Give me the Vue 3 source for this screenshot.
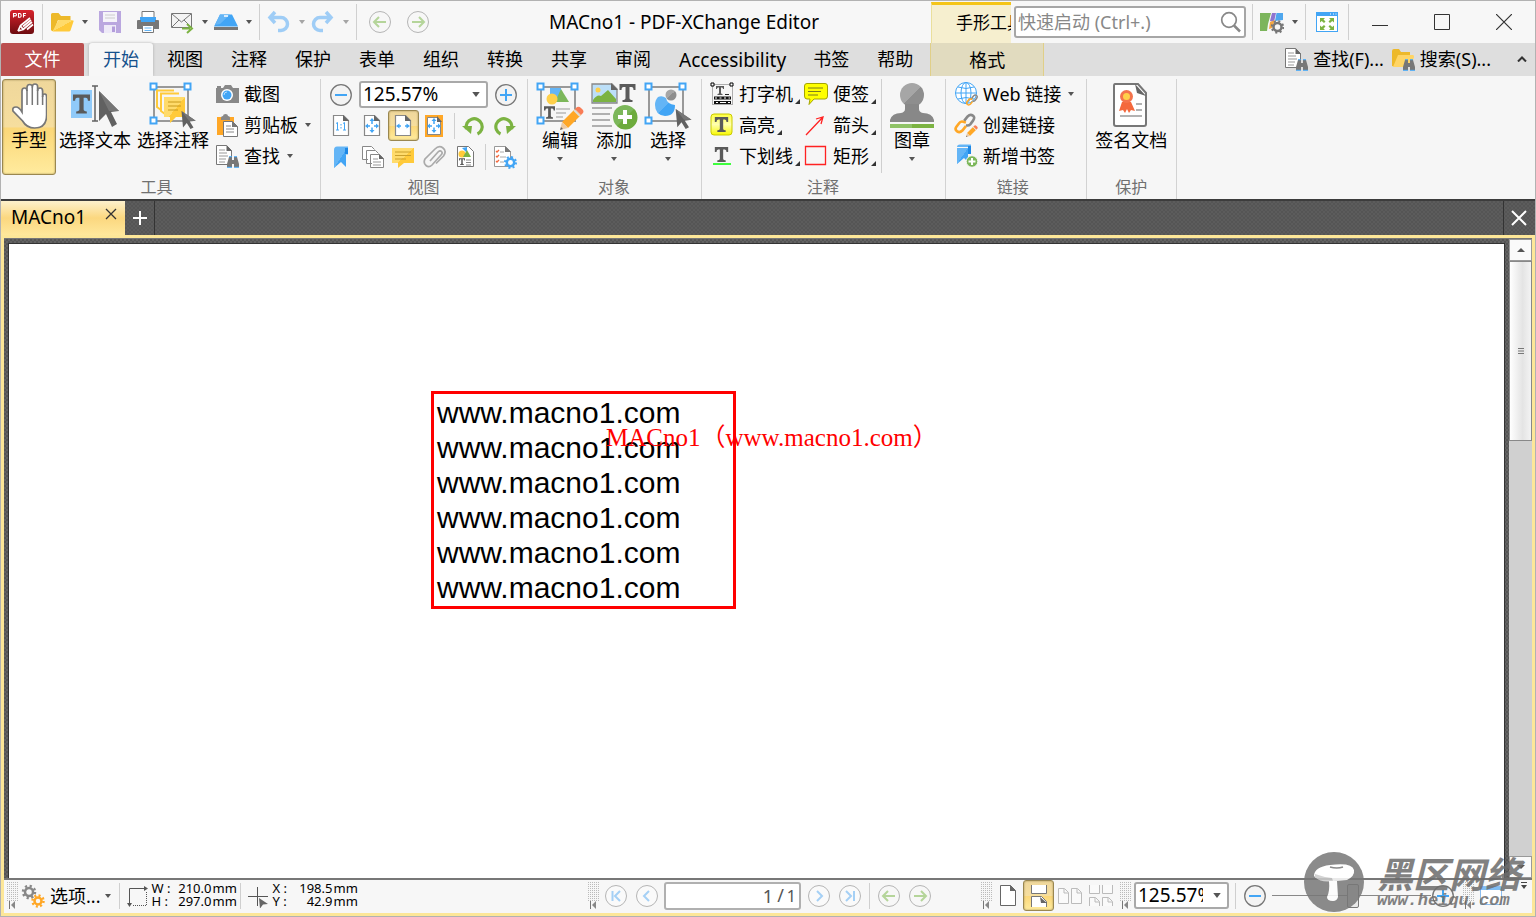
<script setup>
import { h, ref } from 'vue'

const sizes = {
  caret: [6, 4], corner: [5, 5], hand: [36, 48], selText: [48, 48], selNote: [48, 48],
  edit: [48, 48], add: [48, 48], select: [48, 48], stamp: [48, 48], sign: [48, 48],
  grip: [11, 28], mushroom: [60, 60], winMin: [16, 16], winMax: [16, 16], winClose: [16, 16],
  tabClose: [12, 12], plus: [14, 14], bigClose: [16, 16], up: [8, 4], down: [8, 4], thumbGrip: [6, 6],
  chevron: [10, 6], overflow: [8, 8],
}
const Icon = (props) => {
  const [width, height] = sizes[props.name] || [24, 24]
  return h('svg', { width, height, 'aria-hidden': 'true' }, [h('use', { href: '#' + props.name })])
}
Icon.props = ['name']

const zoom = ref('125.57%')
const page = ref('1')
const slider = ref(51)
const tabs = ['视图', '注释', '保护', '表单', '组织', '转换', '共享', '审阅', 'Accessibility', '书签', '帮助']
const lines = Array(6).fill('www.macno1.com')
</script>

<template>
  <div class="window">
    <svg width="0" height="0" class="sheet" aria-hidden="true">
      <defs>
        <linearGradient id="gRed" x2="0" y2="1"><stop stop-color="#d8222b" /><stop offset="1" stop-color="#6d0c10" /></linearGradient>
        <linearGradient id="gBlue" x2="1" y2="1"><stop offset=".5" stop-color="#64b5f6" /><stop offset=".5" stop-color="#42a5f5" /></linearGradient>
        <linearGradient id="gGrey" x2="1" y2="1"><stop offset=".5" stop-color="#a6a6a6" /><stop offset=".5" stop-color="#8e8e8e" /></linearGradient>
        <linearGradient id="gYel" x2="1" y2="1"><stop offset=".5" stop-color="#ffdb6b" /><stop offset=".5" stop-color="#ffca3a" /></linearGradient>
        <linearGradient id="gHigh" x2="0" y2="1"><stop stop-color="#ffff3c" /><stop offset=".5" stop-color="#ffffb0" /><stop offset="1" stop-color="#f8f800" /></linearGradient>
      </defs>
      <symbol id="caret" viewBox="0 0 6 4"><path d="M0 0h6L3 4z" fill="#555" /></symbol>
      <symbol id="corner" viewBox="0 0 5 5"><path d="M5 0v5H0z" fill="#333" /></symbol>
      <symbol id="up" viewBox="0 0 8 4"><path d="M0 4h8L4 0z" fill="#555" /></symbol>
      <symbol id="down" viewBox="0 0 8 4"><path d="M0 0h8L4 4z" fill="#555" /></symbol>
      <symbol id="thumbGrip" viewBox="0 0 6 6"><path d="M0 .5h6M0 3h6M0 5.500h6" stroke="#777" /></symbol>
      <symbol id="chevron" viewBox="0 0 10 6"><path d="M1 5.500 5 1.500l4 4" fill="none" stroke="#333" stroke-width="2" /></symbol>
      <symbol id="overflow" viewBox="0 0 8 8"><path d="M1 .5h6" stroke="#444" /><path d="M1 3h6L4 7z" fill="#444" /></symbol>
      <symbol id="winMin" viewBox="0 0 16 16"><path d="M0 11.500h16" stroke="#333" /></symbol>
      <symbol id="winMax" viewBox="0 0 16 16"><path d="M.5.5h15v15H.5z" fill="none" stroke="#333" /></symbol>
      <symbol id="winClose" viewBox="0 0 16 16"><path d="m0 0 16 16M16 0 0 16" stroke="#333" stroke-width="1.200" /></symbol>
      <symbol id="tabClose" viewBox="0 0 12 12"><path d="m1 1 10 10M11 1 1 11" stroke="#333" stroke-width="1.300" /></symbol>
      <symbol id="bigClose" viewBox="0 0 16 16"><path d="m1 1 14 14M15 1 1 15" stroke="#fff" stroke-width="2" /></symbol>
      <symbol id="plus" viewBox="0 0 14 14"><path d="M7 0v14M0 7h14" stroke="#fff" stroke-width="2" /></symbol>

      <symbol id="pdf" viewBox="0 0 24 24">
        <rect width="24" height="24" rx="3" fill="url(#gRed)" />
        <path d="M3.500 7.500v-4h2q1 0 1 1.200t-1 1.200h-2M8.500 3.500v3.800H10q1.200-.3 1.200-1.900T10 3.500zM13.500 7.600V3.500H16M13.500 5.500h2" fill="none" stroke="#fff" stroke-width="1.100" />
        <path d="m8 21 2.500-5.500L20 8M13 19.500l9-7.500M8 21l5-1.500-2-3M13 16.500l8-6.500M17 19.500l6-5" fill="none" stroke="#fff" stroke-width="1.700" />
      </symbol>
      <symbol id="open" viewBox="0 0 24 24">
        <path d="M1 20V4.500Q1 3 2.500 3h6L11 6h9.500v4H8l-4 11H2z" fill="#edb92a" />
        <path d="M8.500 10H22q2 0 1.500 1.500l-3 9q-.5 1-1.500 1H2.500z" fill="url(#gYel)" />
      </symbol>
      <symbol id="save" viewBox="0 0 24 24">
        <path d="M1 1h22v22H4l-3-3z" fill="#b39ddb" opacity=".9" /><path d="M5 2h14v10H5z" fill="#f5f3fa" /><path d="M7 5h10M7 8h10" stroke="#ccc" /><path d="M6 15h12v8H6z" fill="#eeeaf8" /><path d="M14 16.500h3V22h-3z" fill="#b39ddb" />
      </symbol>
      <symbol id="print" viewBox="0 0 24 24">
        <path d="M6 9V1.500h12V9" fill="#fff" stroke="#777" /><path d="M4 7h16v5H4z" fill="#42a5f5" /><path d="M2 10h3v2h14v-2h3q1 0 1 1v8H1v-8q0-1 1-1z" fill="#777" /><path d="M6.500 15.500h11v7h-11z" fill="#fff" stroke="#777" /><path d="M8.500 18h7M8.500 20.500h7" stroke="#64b5f6" />
      </symbol>
      <symbol id="mail" viewBox="0 0 24 24">
        <path d="M1.500 3.500h20v14h-20z" fill="#f4f4f4" stroke="#777" /><path d="m2 4 9.500 8L21 4M2 17l7-7M14 10l7 7" fill="none" stroke="#777" /><path d="M12 18.500h8M17 14l5 4.500-5 4.500" fill="none" stroke="#7cb342" stroke-width="2" />
      </symbol>
      <symbol id="scan" viewBox="0 0 24 24">
        <path d="M6 4.500h12l6 12H0z" fill="#42a5f5" /><path d="M6 4.500h10L6 14l-5 1z" fill="#64b5f6" /><path d="M10 6h4" stroke="#fff" stroke-width="1.500" /><path d="M0 18.500h24" stroke="#777" stroke-width="3" />
      </symbol>
      <symbol id="undo" viewBox="0 0 24 24"><path d="M8 2 3 7.500 8 13M3 7.500h11a6 6 0 0 1 0 13h-3" fill="none" stroke="#9fcdf6" stroke-width="3.500" /></symbol>
      <symbol id="redo" viewBox="0 0 24 24"><path d="m15 2 5 5.500-5 5.500M20 7.500H9a6 6 0 0 0 0 13h3" fill="none" stroke="#9fcdf6" stroke-width="3.500" /></symbol>
      <symbol id="back" viewBox="0 0 24 24"><circle cx="12" cy="12" r="10.500" fill="#f7f7f7" stroke="#b5b5b5" /><path d="M18 12H7M11 7l-5 5 5 5" fill="none" stroke="#b5d59a" stroke-width="2" /></symbol>
      <symbol id="fwd" viewBox="0 0 24 24"><circle cx="12" cy="12" r="10.500" fill="#f7f7f7" stroke="#b5b5b5" /><path d="M6 12h11M13 7l5 5-5 5" fill="none" stroke="#b5d59a" stroke-width="2" /></symbol>
      <symbol id="first" viewBox="0 0 24 24"><circle cx="12" cy="12" r="10.500" fill="#fafafa" stroke="#b5b5b5" /><path d="M8.500 7v10M16 7l-5 5 5 5" fill="none" stroke="#a5d0f5" stroke-width="2" /></symbol>
      <symbol id="prev" viewBox="0 0 24 24"><circle cx="12" cy="12" r="10.500" fill="#fafafa" stroke="#b5b5b5" /><path d="m14 7-5 5 5 5" fill="none" stroke="#a5d0f5" stroke-width="2" /></symbol>
      <symbol id="next" viewBox="0 0 24 24"><circle cx="12" cy="12" r="10.500" fill="#fafafa" stroke="#b5b5b5" /><path d="m10 7 5 5-5 5" fill="none" stroke="#a5d0f5" stroke-width="2" /></symbol>
      <symbol id="last" viewBox="0 0 24 24"><circle cx="12" cy="12" r="10.500" fill="#fafafa" stroke="#b5b5b5" /><path d="M16 7v10M8 7l5 5-5 5" fill="none" stroke="#a5d0f5" stroke-width="2" /></symbol>
      <symbol id="zoomOut" viewBox="0 0 24 24"><circle cx="12" cy="12" r="10.300" fill="#f3f3f3" stroke="#777" stroke-width="1.300" /><path d="M6 12h12" stroke="#42a5f5" stroke-width="2" /></symbol>
      <symbol id="zoomIn" viewBox="0 0 24 24"><circle cx="12" cy="12" r="10.300" fill="#f3f3f3" stroke="#777" stroke-width="1.300" /><path d="M6 12h12M12 6v12" stroke="#42a5f5" stroke-width="2" /></symbol>
      <symbol id="search" viewBox="0 0 24 24"><circle cx="11" cy="10" r="7.300" fill="none" stroke="#888" stroke-width="1.700" /><path d="m16 15.500 6 6" stroke="#888" stroke-width="2.500" /></symbol>
      <symbol id="custom" viewBox="0 0 24 24">
        <path d="M0 3h11L8 14l-1 7H0z" fill="#7cb55c" /><path d="M12 3h4l-2 9-4-1z" fill="#8e75d0" /><path d="M16.500 3H23v7l-8 1z" fill="#4fa7ee" /><path d="m10 12 5-2-3 8-3 1z" fill="#f5a742" />
        <circle cx="17.500" cy="17" r="4" fill="#f7f7f7" stroke="#777" stroke-width="2.500" /><circle cx="17.500" cy="17" r="5.700" fill="none" stroke="#777" stroke-width="2" stroke-dasharray="2 2.500" />
      </symbol>
      <symbol id="full" viewBox="0 0 24 24">
        <path d="M1 2h22v20H1z" fill="#42a5f5" /><path d="M2 6h20v15H2z" fill="#fff" /><path d="M15 4h1M18 4h1M20.500 4h1" stroke="#fff" />
        <path d="M5 8h5L8.500 9.500l2 2-1.500 1.500-2.300-2L5 12.500zM19 8h-5l1.500 1.500-2 2 1.500 1.500 2.300-2 1.700 1.500zM5 20h5l-1.500-1.500 2-2L9 15l-2.300 2L5 15.500zM19 20h-5l1.500-1.500-2-2L15 15l2.300 2 1.700-1.500z" fill="#7cb342" />
      </symbol>

      <symbol id="binos" viewBox="0 0 12 12"><path d="M2 1h3v3h2V1h3l2 7v3H7V8H5v3H0V8z" fill="#777" /><path d="M2 .7h3M7 .7h3M0 11.300h5M7 11.300h5" stroke="#42a5f5" /></symbol>
      <symbol id="find" viewBox="0 0 24 24">
        <path d="M1.500 1.500h10l5 5v14h-15z" fill="#fff" stroke="#777" /><path d="M11.500 1v6H17" fill="#666" /><path d="M4 6h6M4 9h8M4 12h9M4 15h7M4 18h6" stroke="#999" /><use href="#binos" x="12" y="12" width="12" height="12" />
      </symbol>
      <symbol id="findDir" viewBox="0 0 24 24">
        <path d="M1 19V4q0-2 2-2h5l2 3h9v5H7l-3 10z" fill="#edb92a" /><path d="M7 8h15q1 0 1 2l-3 10H2z" fill="#ffd565" /><use href="#binos" x="12" y="12" width="12" height="12" />
      </symbol>

      <symbol id="hand" viewBox="0 0 36 48">
        <path d="M11 30V9q0-3 2.500-3T16 9V5.500q0-3 2.700-3t2.600 3V5q0-3 2.700-3t2.600 3v4q0-3 2.500-3t2.500 3v6q0-3 2-3t2 3v18q0 13-12 13-8 0-12-7L2 29q-1-4 3-4 3 0 6 5z" fill="#fff" stroke="#777" stroke-width="1.700" />
        <path d="M16 8v15M21.300 5v18M26.600 8v15M31.600 14v9" stroke="#777" stroke-width="1.500" />
      </symbol>
      <symbol id="cursor" viewBox="0 0 20 24"><path d="m0 0 19 13-8 1 5 8-4 2-5-8-5 6z" fill="#616161" /><path d="m0 0 19 13-9 0z" fill="#777" /></symbol>
      <symbol id="letterT" viewBox="0 0 16 18"><path d="M0 0h16v6h-2q0-3-2-3H10v11q0 2 3 2v2H3v-2q3 0 3-2V3H4Q2 3 2 6H0z" fill="#5a5a5a" /></symbol>
      <symbol id="selText" viewBox="0 0 48 48">
        <path d="M0 8h21v28H0z" fill="#90caf9" /><use href="#letterT" x="2" y="12" width="17" height="20" /><path d="M21 4h6M24 4v35M21 39h6" stroke="#616161" stroke-width="1.500" fill="none" /><path d="m28 9 20 20-8 1 6 12-5 3-6-13-7 7z" fill="#616161" /><path d="m28 9 20 20H38z" fill="#757575" />
      </symbol>
      <symbol id="frame" viewBox="0 0 48 48">
        <path d="M5 5h34v34H5z" fill="none" stroke="#999" stroke-width="2" /><path d="M1.500 1.500h6v6h-6zM35.500 1.500h6v6h-6zM1.500 35.500h6v6h-6z" fill="#fff" stroke="#42a5f5" stroke-width="2" />
      </symbol>
      <symbol id="selNote" viewBox="0 0 48 48">
        <use href="#frame" width="48" height="48" /><path d="M7 8.500h18M8 8v17l4 3M11 11.500h19M12 12v17l4 3" fill="none" stroke="#ffca3a" stroke-width="2" /><path d="M15 15h21v20h-9l-6 6v-6h-6z" fill="url(#gYel)" /><path d="M19 20h13M19 24h13M19 28h10" stroke="#c89a1c" /><use href="#cursor" x="32" y="29" width="16" height="18" />
      </symbol>
      <symbol id="shot" viewBox="0 0 24 24">
        <path d="M2 4h4v2h2l2-3h6l2 3h6v15H1V6h1z" fill="#888" /><circle cx="12" cy="13" r="6" fill="#fff" /><circle cx="12" cy="13" r="4.500" fill="#42a5f5" /><path d="M9 13q0-3 3-3" stroke="#b8dcfa" fill="none" />
      </symbol>
      <symbol id="paste" viewBox="0 0 24 24">
        <path d="M2 4h17v18H2z" fill="#ffa726" /><path d="M6 5q0-2 2-2 0-2 2.500-2T13 3q2 0 2 2v2H6z" fill="#888" /><path d="M8.500 8.500h9l5 5v10h-14z" fill="#fff" stroke="#777" /><path d="M17 8v6h6" fill="#777" /><path d="M11 13h5M11 16h8M11 19h8" stroke="#888" />
      </symbol>

      <symbol id="pageS" viewBox="0 0 24 24"><path d="M3.500 1.500h10l5 5v15h-15z" fill="#fff" stroke="#888" stroke-width="1.200" /><path d="M13 1v6h6z" fill="#666" /></symbol>
      <symbol id="actual" viewBox="0 0 24 24"><use href="#pageS" width="24" height="24" /><path d="M6 9.500 7.500 8.500V16M6 16h3M13 9.500l1.500-1V16M13 16h3M11 10v1.500M11 13v1.500" stroke="#42a5f5" fill="none" /></symbol>
      <symbol id="arrows4" viewBox="0 0 24 24"><path d="m11 4 2.500 3h-5zM11 19l2.500-3h-5zM4 12l3-2.500v5zM18 12l-3-2.500v5z" fill="#42a5f5" /><path d="M11 6v4M11 13.500v3M6 12h3M13 12h3" stroke="#42a5f5" stroke-width="1.500" /></symbol>
      <symbol id="fitPage" viewBox="0 0 24 24"><use href="#pageS" width="24" height="24" /><use href="#arrows4" width="24" height="24" /></symbol>
      <symbol id="fitWidth" viewBox="0 0 24 24"><use href="#pageS" width="24" height="24" /><path d="m4 12 3.500-2.500v5zM18 12l-3.500-2.500v5z" fill="#42a5f5" /><path d="M6 12h3M13 12h3" stroke="#42a5f5" stroke-width="1.500" /></symbol>
      <symbol id="fitVis" viewBox="0 0 24 24"><path d="M2 1h18v22H2z" fill="#ffa726" /><path d="M4.500 3.500h10l3 3v14h-13z" fill="#fff" stroke="#888" /><path d="M14 2v6h5" fill="#666" /><use href="#arrows4" width="24" height="24" /></symbol>
      <symbol id="rotL" viewBox="0 0 24 24"><path d="M4.500 15a8 8 0 1 1 11 5" fill="none" stroke="#7cb342" stroke-width="3.200" /><path d="M0 12h10l-1 8z" fill="#7cb342" /></symbol>
      <symbol id="rotR" viewBox="0 0 24 24"><path d="M18.500 15a8 8 0 1 0-11 5" fill="none" stroke="#7cb342" stroke-width="3.200" /><path d="M23 12H13l1 8z" fill="#7cb342" /></symbol>
      <symbol id="mark" viewBox="0 0 24 24"><path d="M4 5h12v17l-5-5-7 6z" fill="url(#gBlue)" /><path d="M7 1.500h11v8h-3V5H4q0-3.500 3-3.500z" fill="#64b5f6" /><path d="M15 3v6h3V3z" fill="#1e88e5" /></symbol>
      <symbol id="thumbs" viewBox="0 0 24 24"><path d="M7 14.500H1.500v-13h9l3 3M11 18.500H5.500v-13h9l3 3M9.500 9.500h9l4 4v9h-13z" fill="#fff" stroke="#888" /><path d="M18 9v5h5" fill="#666" /><path d="M12 14h5M12 17h8M12 20h8" stroke="#999" /></symbol>
      <symbol id="note" viewBox="0 0 24 24"><path d="M0 3h22v15h-10l-6 5v-5H0z" fill="url(#gYel)" /><path d="M3 7h16M3 10.500h16M3 14h11" stroke="#caa02c" /></symbol>
      <symbol id="clip" viewBox="0 0 24 24"><path d="m7 16 8-9q2-2 3.500-.5T18 10L9 20q-3 3-6 .5T2 14L12 4q4-4 8-1t.5 8L13 18.500" fill="none" stroke="#aaa" stroke-width="1.700" /></symbol>
      <symbol id="content" viewBox="0 0 24 24"><path d="M3.500 1.500h11l5 5v15h-16z" fill="#fff" stroke="#777" /><circle cx="8" cy="9" r="3.500" fill="#ffca3a" /><path d="m8 3 5-1v6z" fill="#42a5f5" /><path d="m9 12 4-7 4 7z" fill="#7cb342" /><use href="#letterT" x="5" y="13" width="6" height="7" /><path d="M12 15h5M12 17.500h5M12 20h5" stroke="#888" /></symbol>
      <symbol id="props" viewBox="0 0 24 24"><path d="M1.500 1.500h11l5 5v15h-16z" fill="#fff" stroke="#999" /><path d="M12 1v6h6" fill="#777" /><path d="m3 6 1 1 2-2M3 11l1 1 2-2M3 16l1 1 2-2" stroke="#f4683c" fill="none" stroke-width="1.300" /><path d="M7 7h4M7 12h6M7 17h4" stroke="#aaa" /><circle cx="17.500" cy="17.500" r="3.700" fill="#fff" stroke="#42a5f5" stroke-width="2.500" /><circle cx="17.500" cy="17.500" r="5.500" fill="none" stroke="#42a5f5" stroke-width="2" stroke-dasharray="2 2.300" /></symbol>

      <symbol id="pencil" viewBox="0 0 24 24"><path d="m2 16 13-13 6 6L8 22z" fill="#ffa726" /><path d="m15 3 2-2q2-1 4 1l2 2q1 2 0 3l-2 2z" fill="#f97c56" /><path d="M2 16 0 24l8-2z" fill="#edc9a0" /><path d="m0 24 1-3 2 2z" fill="#666" /><path d="m14 4 6 6" stroke="#ddd" stroke-width="2" /></symbol>
      <symbol id="edit" viewBox="0 0 48 48">
        <use href="#frame" width="48" height="48" /><path d="M14 6h11v14H14z" fill="#64b5f6" /><path d="m19 20 6-13 8 13z" fill="#7cb75a" /><circle cx="16" cy="17" r="5.500" fill="#ffd04a" /><use href="#letterT" x="8" y="24" width="11" height="13" /><path d="M20 27h14M20 31h10M20 35h7" stroke="#999" /><use href="#pencil" x="24" y="24" width="24" height="24" />
      </symbol>
      <symbol id="add" viewBox="0 0 48 48">
        <path d="M2 2h20l5 5v14H2z" fill="#bcdff8" stroke="#888" stroke-width="1.300" /><circle cx="8" cy="8" r="2.500" fill="#ffd04a" /><path d="M3 18q4-6 8-4l7-6 8 9v3H3z" fill="#7cb342" /><path d="M21 1v7h7z" fill="#666" /><use href="#letterT" x="29" y="2" width="17" height="18" />
        <path d="M2 26h20M2 32h18M2 38h18M2 44h20" stroke="#999" stroke-width="1.500" /><circle cx="35" cy="35" r="12" fill="#7cb75a" /><path d="m27 44 17-17a12 12 0 0 1-17 17z" fill="#6dab3c" /><path d="M35 28v14M28 35h14" stroke="#fff" stroke-width="4" />
      </symbol>
      <symbol id="select" viewBox="0 0 48 48"><use href="#frame" width="48" height="48" /><circle cx="27" cy="13" r="5.500" fill="url(#gGrey)" /><path d="M14 15q4-2 8 1 1 6 9 7 0 11-10 11-10-1-10-11 0-5 3-8z" fill="url(#gBlue)" /><use href="#cursor" x="31" y="27" width="18" height="20" /></symbol>

      <symbol id="typew" viewBox="0 0 24 24"><path d="M2.500 2.500h20v20h-20z" fill="none" stroke="#666" stroke-dasharray="1 1" /><path d="M1 1h3v3H1zM20 1h3v3h-3z" fill="#fff" stroke="#000" /><use href="#letterT" x="6" y="4" width="8" height="9" /><path d="M15 12.500h4" stroke="#222" /><path d="M4 16h17M4 20.500h17" stroke="#111" stroke-width="3" /><path d="M5 16h15" stroke="#fff" stroke-dasharray="2 2.500" /><path d="M6 20.500h2M10 20.500h6M18 20.500h2" stroke="#fff" /></symbol>
      <symbol id="high" viewBox="0 0 24 24"><rect x="1" y="1" width="21" height="21" rx="3" fill="url(#gHigh)" stroke="#c9c900" /><use href="#letterT" x="4" y="4" width="15" height="15" /></symbol>
      <symbol id="under" viewBox="0 0 24 24"><use href="#letterT" x="4" y="3" width="15" height="15" /><path d="M3 20h18" stroke="#0f0" stroke-width="1.500" /></symbol>
      <symbol id="sticky" viewBox="0 0 24 24"><path d="M3 1.500h18q2.500 0 2.500 2.500v10q0 3-2.500 3H10l-5 5.500 1-5.500H3q-2.500 0-2.500-3V4Q.5 1.500 3 1.500z" fill="#ff0" stroke="#a4a400" /><path d="M4 6h15M4 9.500h13M4 13h10" stroke="#7a7a20" /></symbol>
      <symbol id="arrow" viewBox="0 0 24 24"><path d="M2 22 19 4M12 6l7-2-2 7" fill="none" stroke="#f22" stroke-width="1.300" /></symbol>
      <symbol id="rect" viewBox="0 0 24 24"><path d="M1.500 2.500h20v18h-20z" fill="none" stroke="#f22" stroke-width="1.300" /></symbol>
      <symbol id="stamp" viewBox="0 0 48 48"><circle cx="24" cy="13" r="12" fill="url(#gGrey)" /><path d="M17 22h14v5q0 3 4 4 9 0 11 7v2H2v-2q2-7 11-7 4-1 4-4z" fill="#888" /><path d="M2 44h44" stroke="#8fc266" stroke-width="4" /><path d="M24 44h22" stroke="#7cb342" stroke-width="4" /></symbol>

      <symbol id="links" viewBox="0 0 24 24"><path d="m11 9 4-5q3-3 6-1t0 6l-3 4q-2 2-5 1" fill="none" stroke="#888" stroke-width="3" /><path d="m13 11-3-1q-3-1-5 2l-3 4q-2 3 1 5t6-1l4-5" fill="none" stroke="#ffa726" stroke-width="3" /></symbol>
      <symbol id="web" viewBox="0 0 24 24"><circle cx="12" cy="11" r="10.500" fill="#fff" stroke="#42a5f5" /><path d="M12 .5v21M1.500 11h21M4 5q8 3 16 0M4 17q8-3 16 0" fill="none" stroke="#42a5f5" /><ellipse cx="12" cy="11" rx="5" ry="10.500" fill="none" stroke="#42a5f5" /><use href="#links" x="12" y="12" width="12" height="12" /></symbol>
      <symbol id="mkLink" viewBox="0 0 24 24"><use href="#links" width="22" height="21" /><use href="#pencil" x="12" y="12" width="12" height="12" /></symbol>
      <symbol id="addMark" viewBox="0 0 24 24"><path d="M3 4h11v14l-4-4-7 6z" fill="url(#gBlue)" /><path d="M6 .5h11v9h-3V3H3q0-2.500 3-2.500z" fill="#64b5f6" /><path d="M14 2h3v8h-3z" fill="#1e88e5" /><circle cx="18" cy="17.500" r="5.800" fill="#7cb75a" stroke="#f6f6f6" /><path d="M18 14v7M14.500 17.500h7" stroke="#fff" stroke-width="2" /></symbol>
      <symbol id="sign" viewBox="0 0 48 48"><path d="M8 2h23l8 9v31q0 2-2 2H9q-2 0-2-2V4q0-2 1-2z" fill="#fff" stroke="#777" stroke-width="2" /><path d="m28 2 2 9 9 3z" fill="#666" /><path d="m15 20-3 9 4-1 2 3 2-4 2 4 2-3 4 1-4-9z" fill="#f4683c" /><circle cx="19.500" cy="14.500" r="6.500" fill="#f4744c" /><circle cx="19.500" cy="14.500" r="3.500" fill="#ffd04a" /><path d="M29 22h6M29 28h6M13 34h22" stroke="#999" stroke-width="1.500" /></symbol>

      <symbol id="grip" viewBox="0 0 11 28"><path d="M.5 0v19M2.500 0v19M4.500 0v19M6.500 0v19M8.500 0v19M10.500 0v19" stroke="#bbb" stroke-dasharray="1 1" /><path d="M2.500 19v8" stroke="#777" /><path d="M8 19v8l-4-4z" fill="#888" /></symbol>
      <symbol id="gears" viewBox="0 0 24 24"><circle cx="8" cy="8" r="4" fill="none" stroke="#888" stroke-width="2.500" /><circle cx="8" cy="8" r="6" fill="none" stroke="#888" stroke-width="2.500" stroke-dasharray="2.200 2.500" /><circle cx="17" cy="17" r="3.500" fill="none" stroke="#ffa726" stroke-width="2.500" /><circle cx="17" cy="17" r="5.500" fill="none" stroke="#ffa726" stroke-width="2.500" stroke-dasharray="2 2.300" /></symbol>
      <symbol id="size" viewBox="0 0 24 24"><path d="M4.500 20V4.500H20" fill="none" stroke="#555" /><path d="m19 2 4 2.500-4 2.500zM2 19h5l-2.500 4z" fill="#555" /><path d="M21.500 8v13.500H7" fill="none" stroke="#555" stroke-dasharray="1 1" /></symbol>
      <symbol id="cross" viewBox="0 0 24 24"><path d="M2 12.500h20M11.500 3v19" stroke="#555" /><path d="m13 14 9 6-5 .5-3 4z" fill="#666" /></symbol>
      <symbol id="single" viewBox="0 0 24 24"><path d="M4.500 1.500h10l5 5v15h-15z" fill="#fff" stroke="#666" /><path d="M14 1v6h6" fill="#666" /></symbol>
      <symbol id="cont" viewBox="0 0 24 24"><path d="M4.500 1v8.500h15V1" fill="#fff" stroke="#777" /><path d="M4.500 23V12.500h10l5 5V23" fill="#fff" stroke="#777" /><path d="m13 13 1 6h6z" fill="#666" /></symbol>
      <symbol id="facing" viewBox="0 0 24 24"><path d="M.5 4.500h6l4 4v11H.5zM13.500 4.500h6l4 4v11h-10zM6 5v4h4M19 5v4h4" fill="#fafafa" stroke="#bbb" /></symbol>
      <symbol id="facing4" viewBox="0 0 24 24"><path d="M.5 1v8.500h10V1M13.500 1v8.500h10V1M.5 22v-8.500h6l4 4V22M13.500 22v-8.500h6l4 4V22M6 14v4h4M19 14v4h4" fill="#fafafa" stroke="#bbb" /></symbol>
      <symbol id="fullP" viewBox="0 0 24 24"><path d="M1.500 2.500h21v18h-21z" fill="#fff" stroke="#8bbdf0" /><path d="M1 3h22v3H1z" fill="#7fbdf3" /></symbol>
      <symbol id="mushroom" viewBox="0 0 60 60"><circle cx="30" cy="30" r="30" fill="#777" /><path d="M10 24q0-9 16-11 22-3 24 5 1 6-7 10-9 1-18 1-13-1-15-5z" fill="#fff" /><path d="M11 25q6 6 18 4l-1-3q-9-1-17-4z" fill="#ccc" /><path d="M25 29h8l1 16q-1 4-5 4-6 0-6-4 3-6 2-16z" fill="#fff" /><path d="M26 15q7 2 13 0" fill="none" stroke="#777" stroke-width="1.500" /></symbol>
    </svg>

    <header class="titlebar">
      <span class="app"><Icon name="pdf" /></span><i class="sep"></i>
      <button class="split" aria-label="打开"><Icon name="open" /><Icon name="caret" /></button>
      <button class="tool" aria-label="保存"><Icon name="save" /></button>
      <button class="tool" aria-label="打印"><Icon name="print" /></button>
      <button class="split" aria-label="邮件"><Icon name="mail" /><Icon name="caret" /></button>
      <button class="split" aria-label="扫描"><Icon name="scan" /><Icon name="caret" /></button>
      <i class="sep"></i>
      <button class="split faded" aria-label="撤销"><Icon name="undo" /><Icon name="caret" /></button>
      <button class="split faded" aria-label="重做"><Icon name="redo" /><Icon name="caret" /></button>
      <i class="sep"></i>
      <button class="tool" aria-label="后退"><Icon name="back" /></button>
      <button class="tool" aria-label="前进"><Icon name="fwd" /></button>
      <h1>MACno1 - PDF-XChange Editor</h1>
      <div class="context">手形工具</div>
      <label class="search"><input type="text" placeholder="快速启动 (Ctrl+.)" aria-label="快速启动"><Icon name="search" /></label>
      <i class="sep"></i>
      <button class="split" aria-label="自定义界面"><Icon name="custom" /><Icon name="caret" /></button>
      <i class="sep"></i>
      <button class="tool narrow" aria-label="全屏"><Icon name="full" /></button>
      <i class="sep end"></i>
      <button class="win" aria-label="最小化"><Icon name="winMin" /></button>
      <button class="win" aria-label="最大化"><Icon name="winMax" /></button>
      <button class="win" aria-label="关闭"><Icon name="winClose" /></button>
    </header>

    <nav class="tabs">
      <button class="file">文件</button>
      <button class="tab current">开始</button>
      <button v-for="t in tabs" :key="t" class="tab" :class="{ latin: t === 'Accessibility' }">{{ t }}</button>
      <button class="tab format">格式</button>
      <span class="grow"></span>
      <button class="finder"><Icon name="find" />查找(F)...</button>
      <button class="finder"><Icon name="findDir" />搜索(S)...</button>
      <button class="fold" aria-label="折叠功能区"><Icon name="chevron" /></button>
    </nav>

    <section class="ribbon">
      <div class="group first">
        <div class="body">
          <button class="big on"><Icon name="hand" />手型</button>
          <button class="big wide"><Icon name="selText" />选择文本</button>
          <button class="big wide"><Icon name="selNote" />选择注释</button>
          <div class="list">
            <button class="item"><Icon name="shot" />截图</button>
            <button class="item"><Icon name="paste" />剪贴板<Icon name="caret" class="drop" /></button>
            <button class="item"><Icon name="find" />查找<Icon name="caret" class="drop" /></button>
          </div>
        </div>
        <h2>工具</h2>
      </div>
      <div class="group">
        <div class="body">
          <div class="list view">
            <div class="row zoomrow">
              <button class="bare" aria-label="缩小"><Icon name="zoomOut" /></button>
              <span class="combo"><select v-model="zoom" aria-label="缩放"><option>125.57%</option></select><Icon name="caret" /></span>
              <button class="bare" aria-label="放大"><Icon name="zoomIn" /></button>
            </div>
            <div class="row">
              <button class="cell" aria-label="实际大小"><Icon name="actual" /></button>
              <button class="cell" aria-label="适合页面"><Icon name="fitPage" /></button>
              <button class="cell on" aria-label="适合宽度"><Icon name="fitWidth" /></button>
              <button class="cell" aria-label="适合可见"><Icon name="fitVis" /></button>
              <i class="bar"></i>
              <button class="cell" aria-label="向左旋转"><Icon name="rotL" /></button>
              <button class="cell" aria-label="向右旋转"><Icon name="rotR" /></button>
            </div>
            <div class="row">
              <button class="cell" aria-label="书签"><Icon name="mark" /></button>
              <button class="cell" aria-label="缩略图"><Icon name="thumbs" /></button>
              <button class="cell" aria-label="注释"><Icon name="note" /></button>
              <button class="cell" aria-label="附件"><Icon name="clip" /></button>
              <button class="cell" aria-label="内容"><Icon name="content" /></button>
              <i class="bar"></i>
              <button class="cell" aria-label="属性"><Icon name="props" /></button>
            </div>
          </div>
        </div>
        <h2>视图</h2>
      </div>
      <div class="group">
        <div class="body">
          <button class="big"><Icon name="edit" />编辑<Icon name="caret" class="below" /></button>
          <button class="big"><Icon name="add" />添加<Icon name="caret" class="below" /></button>
          <button class="big"><Icon name="select" />选择<Icon name="caret" class="below" /></button>
        </div>
        <h2>对象</h2>
      </div>
      <div class="group">
        <div class="body">
          <div class="list notes">
            <button class="item"><Icon name="typew" />打字机<Icon name="corner" class="more" /></button>
            <button class="item"><Icon name="high" />高亮<Icon name="corner" class="more" /></button>
            <button class="item"><Icon name="under" />下划线<Icon name="corner" class="more" /></button>
          </div>
          <div class="list notes">
            <button class="item"><Icon name="sticky" />便签<Icon name="corner" class="more" /></button>
            <button class="item"><Icon name="arrow" />箭头<Icon name="corner" class="more" /></button>
            <button class="item"><Icon name="rect" />矩形<Icon name="corner" class="more" /></button>
          </div>
          <i class="bar tall"></i>
          <button class="big"><Icon name="stamp" />图章<Icon name="caret" class="below" /></button>
        </div>
        <h2>注释</h2>
      </div>
      <div class="group links">
        <div class="body">
          <div class="list">
            <button class="item"><Icon name="web" />Web 链接<Icon name="caret" class="drop" /></button>
            <button class="item"><Icon name="mkLink" />创建链接</button>
            <button class="item"><Icon name="addMark" />新增书签</button>
          </div>
        </div>
        <h2>链接</h2>
      </div>
      <div class="group">
        <div class="body"><button class="big wide"><Icon name="sign" />签名文档</button></div>
        <h2>保护</h2>
      </div>
    </section>

    <div class="docbar">
      <div class="doctab"><span>MACno1</span><button class="bare" aria-label="关闭文档"><Icon name="tabClose" /></button></div>
      <button class="newtab" aria-label="新建"><Icon name="plus" /></button>
      <span class="grow"></span>
      <button class="closeall" aria-label="关闭全部"><Icon name="bigClose" /></button>
    </div>

    <div class="frame">
      <main class="canvas">
        <div class="sheetpage">
          <div class="textbox"><p v-for="(l, i) in lines" :key="i">{{ l }}</p></div>
          <p class="stampText">MACno1（www.macno1.com）</p>
        </div>
        <div class="scroll">
          <button aria-label="向上滚动"><Icon name="up" /></button>
          <div class="thumb"><Icon name="thumbGrip" /></div>
          <span class="grow"></span>
          <button aria-label="向下滚动"><Icon name="down" /></button>
        </div>
      </main>
      <footer class="status">
        <Icon name="grip" />
        <button class="options"><Icon name="gears" />选项...<Icon name="caret" /></button>
        <i class="bar"></i>
        <Icon name="size" class="lead" />
        <dl><dt>W :</dt><dd>210.0</dd><dd>mm</dd><dt>H :</dt><dd>297.0</dd><dd>mm</dd></dl>
        <i class="bar"></i>
        <Icon name="cross" class="lead" />
        <dl><dt>X :</dt><dd>198.5</dd><dd>mm</dd><dt>Y :</dt><dd>42.9</dd><dd>mm</dd></dl>
        <span class="grow"></span>
        <Icon name="grip" />
        <div class="pager">
          <button class="cell" aria-label="首页"><Icon name="first" /></button>
          <button class="cell" aria-label="上一页"><Icon name="prev" /></button>
          <label class="pagebox"><input v-model="page" type="text" aria-label="页码"><span>/<small>1</small></span></label>
          <button class="cell" aria-label="下一页"><Icon name="next" /></button>
          <button class="cell" aria-label="末页"><Icon name="last" /></button>
          <i class="bar"></i>
          <button class="cell" aria-label="上一视图"><Icon name="back" /></button>
          <button class="cell" aria-label="下一视图"><Icon name="fwd" /></button>
        </div>
        <Icon name="grip" />
        <div class="layouts">
          <button class="cell" aria-label="单页"><Icon name="single" /></button>
          <button class="cell on" aria-label="连续"><Icon name="cont" /></button>
          <button class="cell" aria-label="双页"><Icon name="facing" /></button>
          <button class="cell" aria-label="双页连续"><Icon name="facing4" /></button>
        </div>
        <Icon name="grip" />
        <span class="combo small"><select v-model="zoom" aria-label="缩放比例"><option>125.57%</option></select><Icon name="caret" /></span>
        <i class="bar"></i>
        <button class="cell" aria-label="缩小"><Icon name="zoomOut" /></button>
        <input v-model="slider" class="range" type="range" min="0" max="100" aria-label="缩放滑块">
        <button class="bare" aria-label="放大"><Icon name="zoomIn" /></button>
        <span class="tail"><Icon name="grip" /><button class="bare" aria-label="全屏"><Icon name="fullP" /></button><Icon name="overflow" class="over" /></span>
      </footer>
    </div>

    <div class="mark">
      <Icon name="mushroom" />
      <div><strong>黑区网络</strong><em>www.heiqu.com</em></div>
    </div>
  </div>
</template>

<style>
html, body { margin: 0; }
</style>

<style scoped>
* { box-sizing: border-box; }
.window {
  position: relative; display: flex; flex-direction: column; min-height: 100vh; overflow: hidden;
  border: 1px solid #b2b2b2; background: #f7f7f7; color: #000;
  font: 18px/24px "Noto Sans", "Noto Sans CJK SC", sans-serif;
}
.sheet { position: absolute; }
svg { display: block; flex: none; }
button, input, select { font: inherit; color: inherit; margin: 0; padding: 0; border: 0; background: none; border-radius: 0; outline: 0; }
button { display: flex; align-items: center; flex: none; white-space: nowrap; }
h1, h2, p, dl, dd { margin: 0; font-weight: 400; }
.grow { flex: 1; }

.titlebar { display: flex; align-items: center; height: 42px; }
.app { padding: 0 4px 0 9px; }
.sep { width: 1px; height: 36px; margin: 0 4px; background: #d0d0d0; flex: none; }
.sep.end { margin-right: 0; }
.split { height: 34px; padding: 0 3px; gap: 8px; }
.tool { height: 34px; padding: 0 7px; }
.tool.narrow { padding: 0 5px; }
.faded svg:last-child { opacity: .5; }
h1 { flex: 1; text-align: center; font-size: 19px; white-space: nowrap; }
.context { align-self: stretch; width: 80px; padding: 6px 0 0 24px; margin-top: 1px; border-top: 3px solid #f5c518; border-left: 1px solid #eadf9c; background: #f6efcf; font-size: 17px; overflow: hidden; white-space: nowrap; }
.search { display: flex; align-items: center; width: 232px; height: 32px; margin: 0 2px 0 3px; padding: 0 2px; border: 2px solid #a6a6a6; border-radius: 3px; background: #fff; }
.search input { flex: 1; min-width: 0; }
.search input::placeholder { color: #888; opacity: 1; }
.win { justify-content: center; width: 62px; height: 40px; }

.tabs { display: flex; height: 33px; background: #dedede; }
.tabs button { height: 33px; padding-bottom: 2px; }
.file { justify-content: center; width: 83px; margin-right: 5px; background: #bb4f4f; color: #fff; border-radius: 2px 2px 0 0; }
.tab { padding: 0 14px; }
.tab.latin { padding: 0 13px 0 14px; font-size: 19px; }
.tab.current { background: #f7f7f7; color: #14508c; border-radius: 3px 3px 0 0; box-shadow: 0 0 3px #aaa; }
.tab.format { padding: 0 38px; margin-left: 3px; background: #e1dbbf; border: solid #e0cf88; border-width: 0 1px; }
.finder { gap: 5px; margin-right: 7px; }
.fold { padding: 0 8px 0 19px; }

.ribbon { position: relative; z-index: 1; display: flex; height: 123px; padding-top: 3px; background: #f6f6f6; }
.group { display: flex; flex-direction: column; padding: 0 6px 0 5px; border-right: 1px solid #d2d2d2; }
.group.first { padding: 0 9px 0 1px; }
.group.links { padding-right: 12px; }
.body { display: flex; flex: none; height: 96px; }
h2 { font-size: 16px; line-height: 24px; text-align: center; color: #707070; }
.big { flex-direction: column; width: 54px; height: 96px; padding-top: 3px; line-height: 20px; }
.big.wide { width: 78px; }
.below { margin-top: 7px; }
.on { border: 1px solid #9a8750; border-radius: 3px; background: linear-gradient(#efd79b, #f6de9e 50%, #fbd778 51%, #ffeb9e); box-shadow: inset 0 0 2px #9a8750; }
.big.on { padding-top: 2px; }
.list { display: flex; flex-direction: column; }
.view { padding-right: 1px; }
.notes { padding-right: 1px; }
.item { height: 31px; padding: 0 0 2px 3px; gap: 5px; }
.drop { margin-left: 2px; }
.more { align-self: flex-end; margin: 0 0 4px -3px; }
.row { display: flex; align-items: center; height: 31px; }
.zoomrow { padding-left: 3px; gap: 6px; }
.cell { justify-content: center; width: 31px; height: 31px; }
.bar { width: 1px; height: 26px; margin: 0 3px 0 4px; background: #cfcfcf; flex: none; }
.bar.tall { height: 94px; }
.combo { position: relative; display: flex; align-items: center; width: 129px; height: 27px; border: 2px solid #a9a9a9; border-radius: 3px; background: #fff; }
.combo select { width: 100%; height: 23px; padding: 0 24px 0 2px; appearance: none; font-size: 19px; line-height: 23px; }
.combo svg { position: absolute; right: 6px; width: 8px; height: 5px; }

.docbar { display: flex; height: 36px; border-top: 2px solid #3c3c3c; background: repeating-conic-gradient(#555 0 25%, #5c5c5c 0 50%) 0 0 / 4px 4px; }
.doctab { display: flex; justify-content: space-between; width: 124px; padding: 4px 8px 0 10px; background: linear-gradient(#fdf1cc, #fbd77f 50%, #ffe89c); font-size: 19px; }
.doctab .bare { height: 18px; }
.newtab { justify-content: center; width: 30px; border-right: 1px solid #333; }
.closeall { justify-content: center; width: 31px; margin-right: 1px; border-left: 1px solid #333; }

.frame { display: flex; flex-direction: column; flex: 1; padding: 3px; background: #fde798; }
.canvas { display: flex; flex: 1; padding: 5px 0 0 5px; border-top: 1px solid #777; background: repeating-conic-gradient(#555 0 25%, #636363 0 50%) 0 0 / 4px 4px; }
.sheetpage { position: relative; flex: 1; margin-right: 5px; background: #fff; outline: 1px solid #333; }
.textbox { position: absolute; left: 422px; top: 147px; width: 305px; height: 218px; padding: 1px 0 0 3px; border: 3px solid #f00; font: 30px/35px "Liberation Sans", Arial, sans-serif; }
.stampText { position: absolute; left: 597px; top: 178px; color: #f00; font: 25px/32px "Liberation Serif", "Noto Sans CJK SC", serif; white-space: nowrap; }
.scroll { display: flex; flex-direction: column; width: 23px; margin-top: -5px; background: #d0d0d0; }
.scroll button { justify-content: center; height: 22px; border: 1px solid #999; background: #fafafa; }
.thumb { display: flex; align-items: center; justify-content: center; height: 180px; border: 1px solid #888; background: linear-gradient(90deg, #fff, #e4e4e4 60%, #f3f3f3); }

.status { position: relative; display: flex; align-items: center; height: 35px; padding: 0 0 2px 3px; border-top: 2px solid #777; background: #f7f7f7; }
.options { margin-left: 3px; padding-right: 4px; gap: 5px; }
.lead { margin: 0 2px; }
dl { display: grid; grid-template-columns: 24px 35px 24px; column-gap: 1px; padding-bottom: 2px; font-size: 13px; line-height: 13px; }
dt, dd:nth-of-type(odd) { white-space: nowrap; }
dd:nth-of-type(odd) { text-align: right; }
.pager { display: flex; align-items: center; margin: 0 46px 0 1px; }
.pagebox { display: flex; align-items: center; width: 137px; height: 28px; margin: 0 2px; padding: 0 3px; border: 2px solid #b0b0b0; border-radius: 3px; background: #fff; color: #555; }
.pagebox input { flex: 1; min-width: 0; text-align: right; padding-right: 4px; }
.pagebox small { margin-left: 3px; font-size: 16px; }
.layouts { display: flex; margin-right: 4px; }
.combo.small { width: 95px; margin-left: 3px; }
.combo.small + .bar { margin-left: 6px; }
.range { width: 159px; height: 26px; margin-left: 2px; appearance: none; background: linear-gradient(#888, #888) center / 100% 1px no-repeat; }
.range::-webkit-slider-thumb { appearance: none; width: 12px; height: 24px; border: 1px solid #777; border-radius: 2px; background: #e8e8e8; }
.tail { display: flex; align-items: center; gap: 5px; margin-left: 8px; }
.over { align-self: flex-start; margin: 0 4px 12px 12px; }

.mark { position: absolute; right: 14px; bottom: 4px; display: flex; gap: 13px; opacity: .85; pointer-events: none; color: #6c6c6c; }
.mark div { display: flex; flex-direction: column; align-items: flex-start; }
.mark strong { font: italic 700 36px/40px "Noto Sans CJK SC", sans-serif; }
.mark em { font: italic 700 17px/18px "Liberation Mono", monospace; }
</style>
